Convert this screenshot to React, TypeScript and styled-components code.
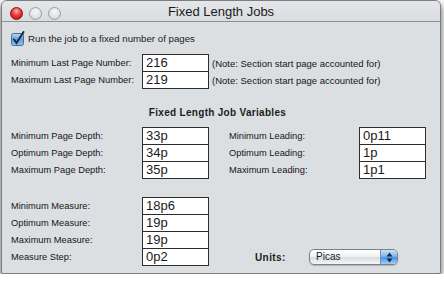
import React, {FC} from 'react';
import styled, {createGlobalStyle} from 'styled-components';

const GlobalStyle = createGlobalStyle`
  html, body {
    margin: 0;
    padding: 0;
    background: #ffffff;
  }
  body {
    font-family: "Liberation Sans", Arial, sans-serif;
    color: #1c1c1c;
  }
`

const Window = styled.div`
  box-sizing: border-box;
  width: 440px;
  height: 274px;
  margin-left: 1px;
  background: #dcdfe2;
  border: 1px solid #7c7e80;
  border-radius: 6px 6px 2px 2px;
  box-shadow: 0 3px 7px rgba(0, 0, 0, 0.7);
  display: flex;
  flex-direction: column;
  overflow: hidden;
`

const TitleBar = styled.div`
  box-sizing: border-box;
  height: 21px;
  display: grid;
  grid-template-columns: 1fr auto 1fr;
  align-items: center;
  border-bottom: 1px solid #8f9194;
  background: linear-gradient(#e4e6e9, #dadde0);
`

const Lights = styled.div`
  display: flex;
  gap: 6px;
  padding-left: 8px;
  padding-top: 4px;
`

const Light = styled.span<{ $red?: boolean }>`
  width: 13px;
  height: 13px;
  border-radius: 50%;
  box-sizing: border-box;
  border: 1px solid ${p => (p.$red ? '#8a1010' : '#9a9ca0')};
  background: ${p =>
    p.$red
      ? 'radial-gradient(circle at 50% 30%, #ffb0b0 0%, #e83a3a 45%, #b01212 100%)'
      : 'radial-gradient(circle at 50% 35%, #f6f7f8 0%, #dfe1e4 60%, #c4c7ca 100%)'};
`

const Title = styled.div`
  font-size: 13px;
  color: #1a1a1a;
  padding-top: 1px;
`

const Content = styled.div`
  padding: 9px 0 0 9px;
  display: flex;
  flex-direction: column;
`

const CheckRow = styled.label`
  display: flex;
  align-items: center;
  gap: 3px;
  height: 14px;
  font-size: 9.7px;
  white-space: nowrap;
`

const FieldBlock = styled.div<{ $top: number }>`
  display: flex;
  flex-direction: column;
  margin-top: ${p => p.$top}px;
`

const FieldRow = styled.div`
  display: flex;
  align-items: center;
  white-space: nowrap;
  & + & {
    margin-top: -1px;
  }
`

const Label = styled.span<{ $w: number }>`
  width: ${p => p.$w}px;
  flex: none;
  font-size: 9.3px;
  color: #151515;
`

const Input = styled.div`
  box-sizing: border-box;
  flex: none;
  width: 67px;
  height: 18px;
  border: 1px solid #2c2c2c;
  background: #ffffff;
  font-size: 13px;
  line-height: 16px;
  padding-left: 3px;
  color: #1a1a1a;
`

const Note = styled.span`
  font-size: 9.5px;
  margin-left: 3px;
  color: #151515;
`

const SectionTitle = styled.div`
  margin-top: 17px;
  height: 14px;
  line-height: 14px;
  font-size: 10px;
  font-weight: bold;
  letter-spacing: 0.3px;
  text-align: center;
  padding-right: 16px;
`

const Columns = styled.div`
  display: flex;
  gap: 20px;
  margin-top: 7px;
`

const BottomRow = styled.div`
  display: flex;
  align-items: flex-end;
  margin-top: 18px;
`

const UnitsGroup = styled.div`
  display: flex;
  align-items: center;
  height: 18px;
  margin-left: 46px;
`

const UnitsLabel = styled.span`
  width: 54px;
  font-size: 10px;
  font-weight: bold;
  letter-spacing: 0.4px;
`

const Popup = styled.div`
  box-sizing: border-box;
  width: 89px;
  height: 16px;
  display: flex;
  border: 1px solid #7d8085;
  border-radius: 5px;
  overflow: hidden;
  background: linear-gradient(#ffffff 0%, #f0f1f2 45%, #dadcde 55%, #f4f5f6 100%);
  box-shadow: 0 1px 1px rgba(0, 0, 0, 0.2);
`

const PopupText = styled.span`
  flex: 1;
  font-size: 10px;
  line-height: 14px;
  padding-left: 6px;
`

const PopupArrows = styled.span`
  width: 16px;
  display: flex;
  align-items: center;
  justify-content: center;
  border-left: 1px solid #6f8fb8;
  background: linear-gradient(#c9e2fb 0%, #7fb6ef 45%, #4a94e4 55%, #9fd0fb 100%);
`

const CheckBox: FC = () => (
    <svg width="14" height="15" viewBox="0 0 14 15">
        <defs>
            <linearGradient id="cb" x1="0" y1="0" x2="0" y2="1">
                <stop offset="0" stopColor="#b8d8f6"/>
                <stop offset="0.5" stopColor="#5d9fe0"/>
                <stop offset="1" stopColor="#8cc4f5"/>
            </linearGradient>
        </defs>
        <rect x="0.5" y="2.5" width="12" height="12" rx="2" fill="url(#cb)" stroke="#4a6d95"/>
        <path d="M3 8.5 L5.5 12 L12.5 1" fill="none" stroke="#1b2a3c" strokeWidth="2" strokeLinecap="round"/>
    </svg>
)

type Field = { label: string, value: string }

const Fields: FC<{ items: Field[], labelWidth: number, note?: string, top?: number }> =
    ({items, labelWidth, note, top = 0}) => (
        <FieldBlock $top={top}>
            {items.map(f => (
                <FieldRow key={f.label}>
                    <Label $w={labelWidth}>{f.label}</Label>
                    <Input>{f.value}</Input>
                    {note && <Note>{note}</Note>}
                </FieldRow>
            ))}
        </FieldBlock>
    )

const App: FC = () => {
    return (
        <>
            <GlobalStyle/>
            <Window>
                <TitleBar>
                    <Lights>
                        <Light $red/>
                        <Light/>
                        <Light/>
                    </Lights>
                    <Title>Fixed Length Jobs</Title>
                    <span/>
                </TitleBar>
                <Content>
                    <CheckRow>
                        <CheckBox/>
                        <span>Run the job to a fixed number of pages</span>
                    </CheckRow>
                    <Fields
                        top={9}
                        labelWidth={131}
                        note="(Note: Section start page accounted for)"
                        items={[
                            {label: 'Minimum Last Page Number:', value: '216'},
                            {label: 'Maximum Last Page Number:', value: '219'},
                        ]}
                    />
                    <SectionTitle>Fixed Length Job Variables</SectionTitle>
                    <Columns>
                        <Fields
                            labelWidth={131}
                            items={[
                                {label: 'Minimum Page Depth:', value: '33p'},
                                {label: 'Optimum Page Depth:', value: '34p'},
                                {label: 'Maximum Page Depth:', value: '35p'},
                            ]}
                        />
                        <Fields
                            labelWidth={130}
                            items={[
                                {label: 'Minimum Leading:', value: '0p11'},
                                {label: 'Optimum Leading:', value: '1p'},
                                {label: 'Maximum Leading:', value: '1p1'},
                            ]}
                        />
                    </Columns>
                    <BottomRow>
                        <Fields
                            labelWidth={131}
                            items={[
                                {label: 'Minimum Measure:', value: '18p6'},
                                {label: 'Optimum Measure:', value: '19p'},
                                {label: 'Maximum Measure:', value: '19p'},
                                {label: 'Measure Step:', value: '0p2'},
                            ]}
                        />
                        <UnitsGroup>
                            <UnitsLabel>Units:</UnitsLabel>
                            <Popup>
                                <PopupText>Picas</PopupText>
                                <PopupArrows>
                                    <svg width="7" height="11" viewBox="0 0 7 11">
                                        <path d="M3.5 0.5 L6.5 4.5 H0.5 Z" fill="#1a2a40"/>
                                        <path d="M3.5 10.5 L6.5 6.5 H0.5 Z" fill="#1a2a40"/>
                                    </svg>
                                </PopupArrows>
                            </Popup>
                        </UnitsGroup>
                    </BottomRow>
                </Content>
            </Window>
        </>
    );
};

export default App;
